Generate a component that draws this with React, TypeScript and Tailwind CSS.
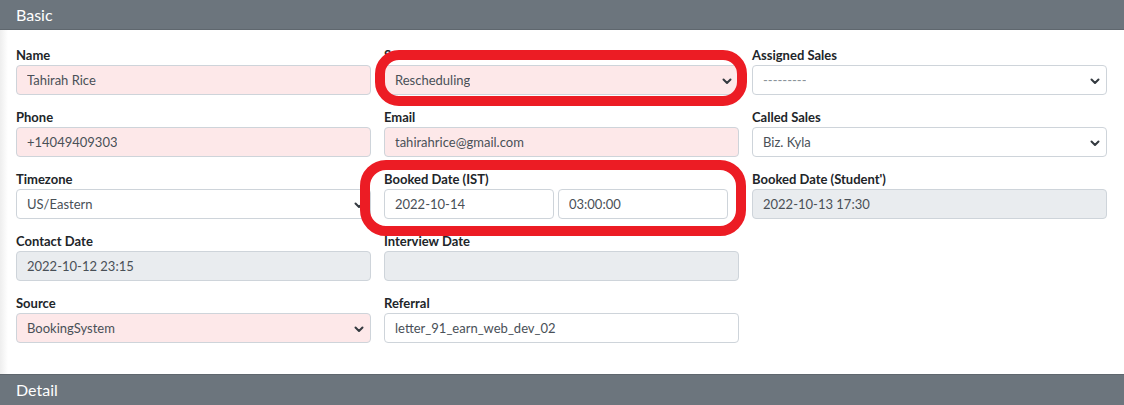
import React from "react";

const Chevron = () => (
  <svg width="10" height="7" viewBox="0 0 10 7" className="shrink-0">
    <polyline points="1.5,1.5 5,5 8.5,1.5" fill="none" stroke="#343a40" strokeWidth="2" strokeLinecap="round" strokeLinejoin="round" />
  </svg>
);

type FieldProps = {
  label: string;
  value?: string;
  bg?: "pink" | "white" | "gray";
  select?: boolean;
  muted?: boolean;
};

const bgClass = {
  pink: "bg-[#fde8e9]",
  white: "bg-white",
  gray: "bg-[#e9ecef]",
};

const Control = ({ value = "", bg = "white", select, muted }: Omit<FieldProps, "label">) => (
  <div
    className={`flex h-[30px] items-center justify-between rounded-[4px] border border-[#ced4da] pl-[10px] pr-[6px] pt-[2px] text-[13px] ${bgClass[bg]} ${muted ? "text-[#8a9299]" : "text-[#495057]"}`}
  >
    <span className="truncate">{value}</span>
    {select && <Chevron />}
  </div>
);

const Label = ({ children }: { children: React.ReactNode }) => (
  <div className="mb-[2px] h-[16px] text-[13px] font-bold leading-[16px] text-[#212529]">{children}</div>
);

const Field = (p: FieldProps) => (
  <div className="flex flex-col">
    <Label>{p.label}</Label>
    <Control value={p.value} bg={p.bg} select={p.select} muted={p.muted} />
  </div>
);

export default function App() {
  return (
    <div className="relative w-[1124px] h-[405px] overflow-hidden bg-white font-[Lato,'Liberation_Sans',sans-serif]">
      <div className="h-[30px] bg-[#6c757d] border-b border-[#5f676e] pl-[16px] text-[16px] leading-[29px] text-white">Basic</div>
      <div className="flex h-[344px]">
        <div className="w-[8px] bg-gradient-to-r from-[#eeeeee] to-white" />
        <div className="flex-1 pl-[8px] pr-[17px] pt-[17px]">
          <div className="grid grid-cols-3 gap-x-[13px] gap-y-[14px]">
            <Field label="Name" value="Tahirah Rice" bg="pink" />
            <Field label="Status" value="Rescheduling" bg="pink" select />
            <Field label="Assigned Sales" value="---------" select muted />

            <Field label="Phone" value="+14049409303" bg="pink" />
            <Field label="Email" value="tahirahrice@gmail.com" bg="pink" />
            <Field label="Called Sales" value="Biz. Kyla" select />

            <Field label="Timezone" value="US/Eastern" select />
            <div className="flex flex-col">
              <Label>Booked Date (IST)</Label>
              <div className="flex gap-[4px] pr-[11px]">
                <div className="flex-1"><Control value="2022-10-14" /></div>
                <div className="flex-1"><Control value="03:00:00" /></div>
              </div>
            </div>
            <Field label="Booked Date (Student')" value="2022-10-13 17:30" bg="gray" />

            <Field label="Contact Date" value="2022-10-12 23:15" bg="gray" />
            <Field label="Interview Date" value="" bg="gray" />
            <div />

            <Field label="Source" value="BookingSystem" bg="pink" select />
            <Field label="Referral" value="letter_91_earn_web_dev_02" />
            <div />
          </div>
        </div>
      </div>
      <div className="h-[31px] bg-[#6c757d] border-t border-[#5f676e] pl-[16px] text-[16px] leading-[29px] text-white">Detail</div>

      <div className="absolute left-[375px] top-[50px] h-[56px] w-[372px] rounded-[24px] border-[10px] border-[#ec1c24]" />
      <div className="absolute left-[360px] top-[160px] h-[76px] w-[386px] rounded-[26px] border-[10px] border-[#ec1c24]" />
    </div>
  );
}
